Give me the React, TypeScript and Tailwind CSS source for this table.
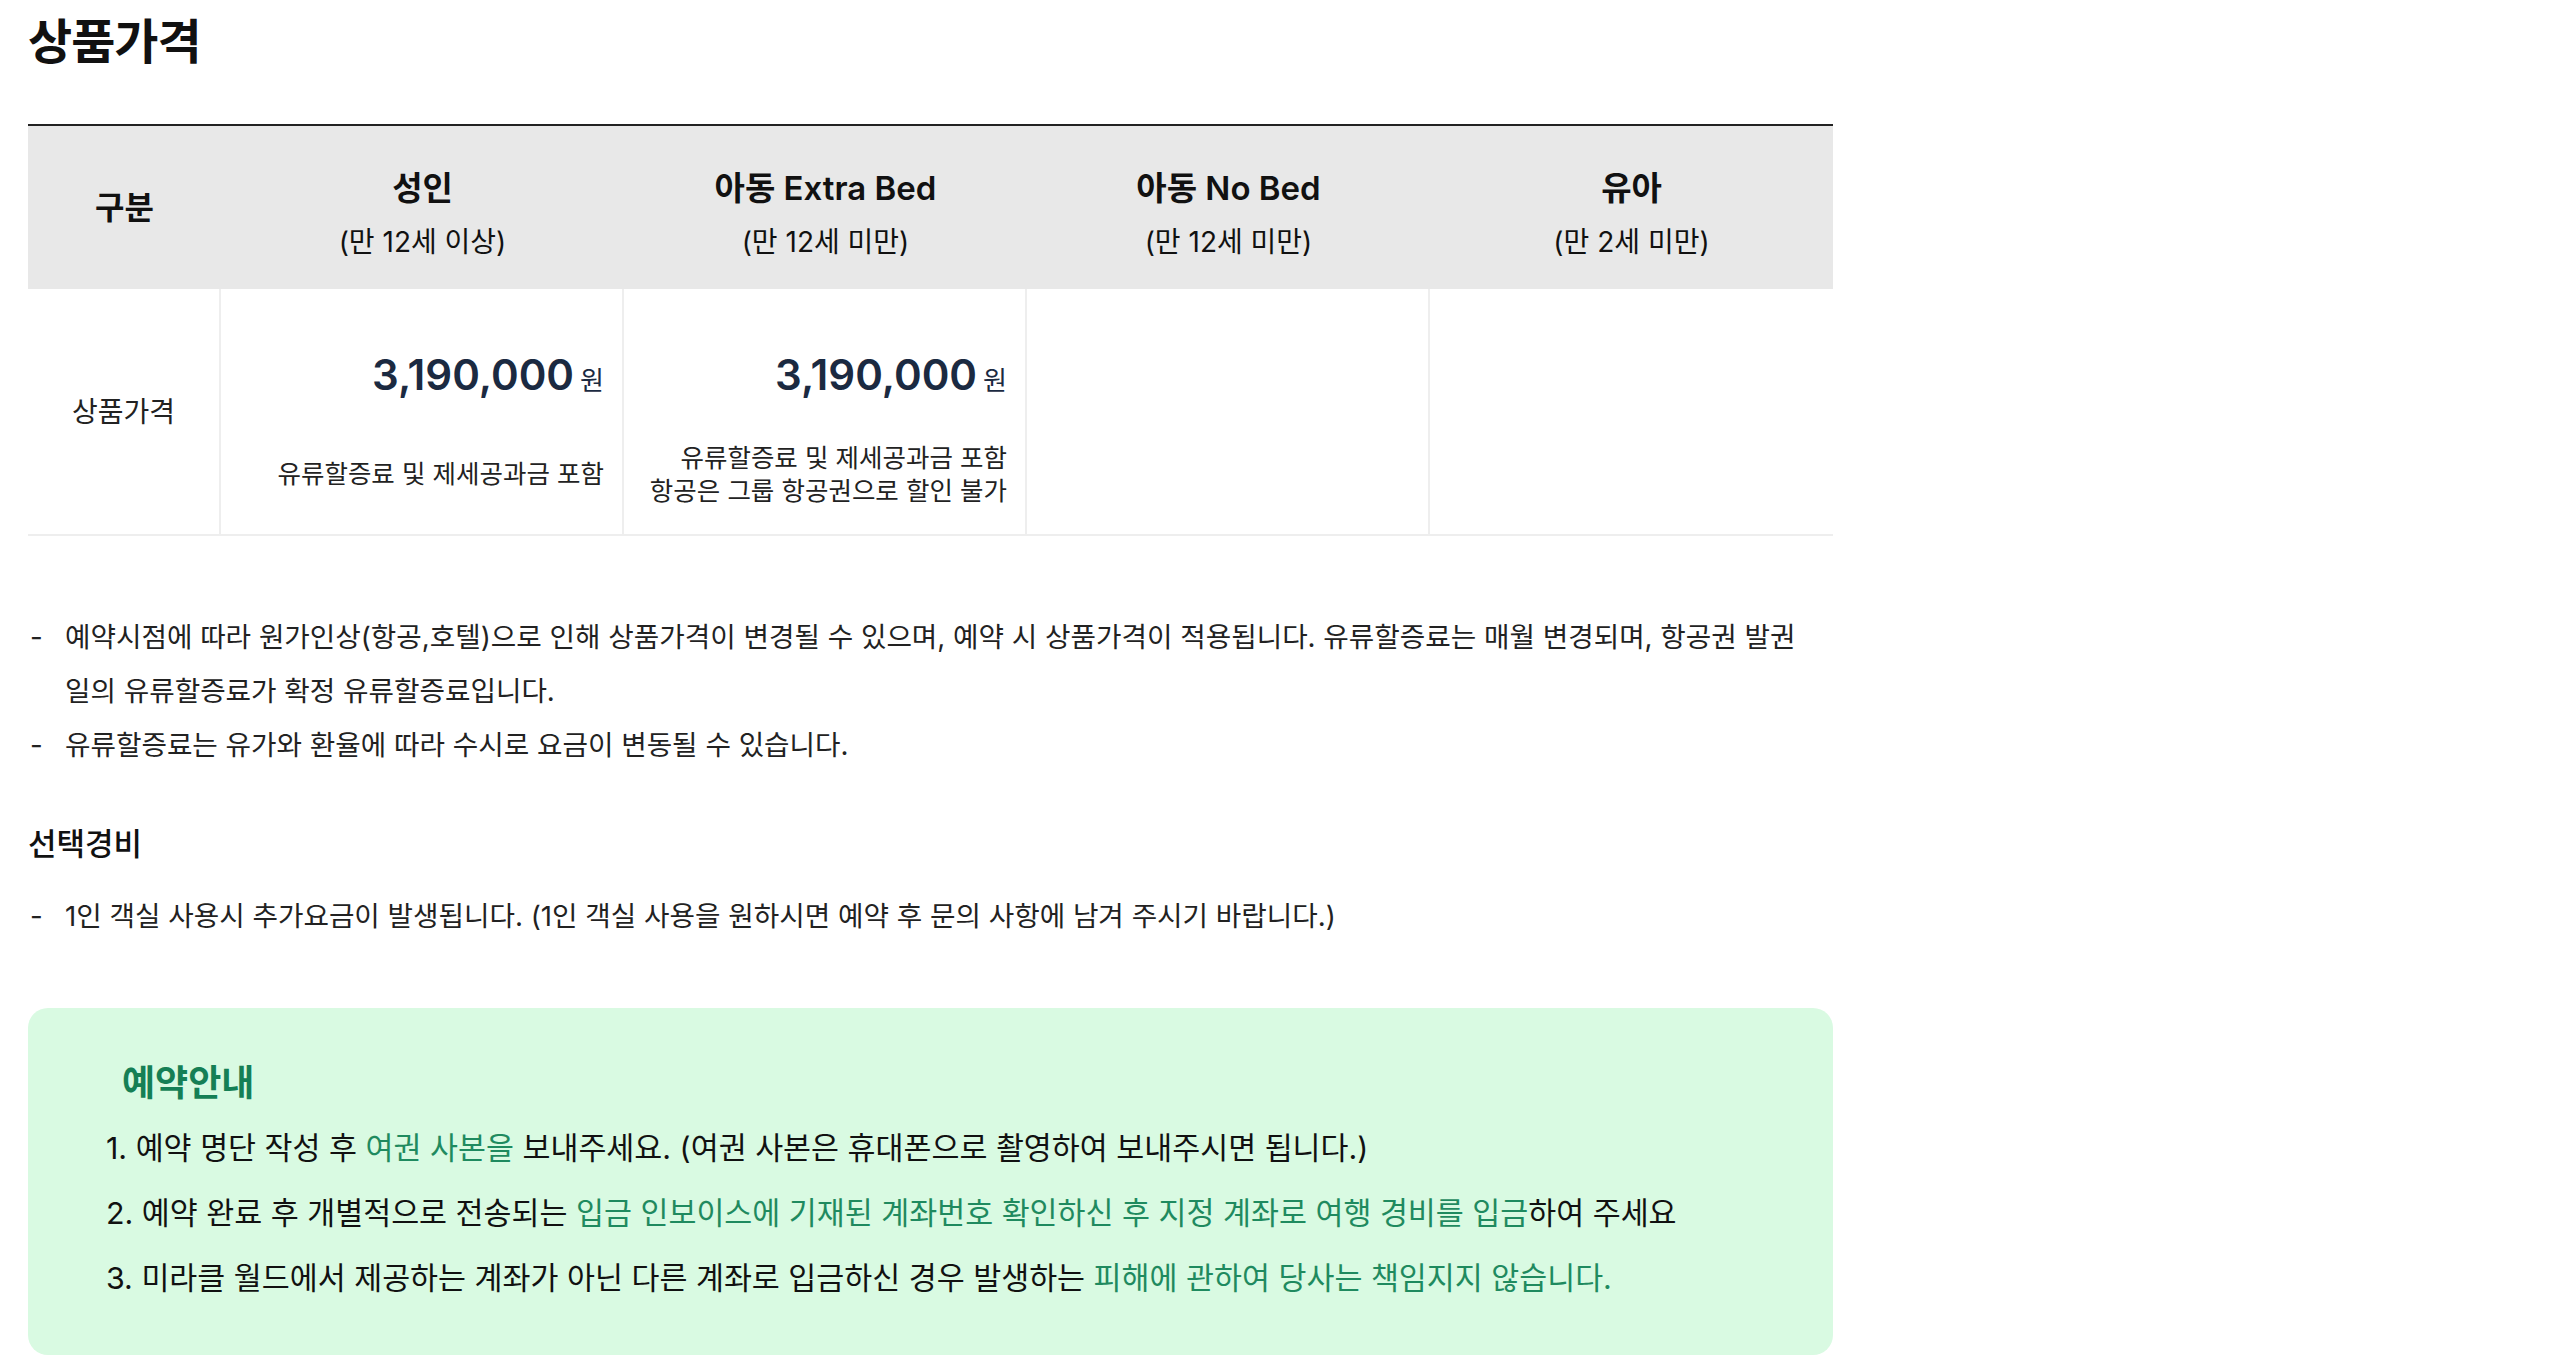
import React from 'react'

const font = { fontFamily: "Inter, 'Noto Sans CJK KR', sans-serif" }

const columns = [
  { title: '성인', sub: '(만 12세 이상)' },
  { title: '아동 Extra Bed', sub: '(만 12세 미만)' },
  { title: '아동 No Bed', sub: '(만 12세 미만)' },
  { title: '유아', sub: '(만 2세 미만)' },
]

const prices: { amount?: string; notes: string[] }[] = [
  { amount: '3,190,000', notes: ['유류할증료 및 제세공과금 포함'] },
  { amount: '3,190,000', notes: ['유류할증료 및 제세공과금 포함', '항공은 그룹 항공권으로 할인 불가'] },
  { notes: [] },
  { notes: [] },
]

function Dash({ children }: { children: React.ReactNode }) {
  return (
    <li className="flex text-[27.7px] leading-[54px] text-[#222]">
      <span className="w-[37px] shrink-0 pl-[2px]">-</span>
      <span>{children}</span>
    </li>
  )
}

function Hl({ children }: { children: React.ReactNode }) {
  return <span className="text-[#1f8a5f]">{children}</span>
}

export default function App() {
  return (
    <div className="min-h-screen w-full bg-white text-[#222]" style={font}>
      <div className="ml-[28px] w-[1805px] pt-[14px]">
        <h2 className="text-[48px] font-bold leading-[56px] tracking-[-1px] text-[#111]">상품가격</h2>

        {/* price table */}
        <div className="mt-[54px] border-t-2 border-[#222]">
          <div className="grid h-[163px] grid-cols-[193px_repeat(4,minmax(0,1fr))] bg-[#e8e8e8] text-[#111]">
            <div className="flex items-center justify-center text-[32px] font-bold">구분</div>
            {columns.map(c => (
              <div key={c.title + c.sub} className="flex flex-col items-center pt-[42px]">
                <div className="text-[33px] font-semibold leading-[40px]">{c.title}</div>
                <div className="mt-[16px] text-[28px] leading-[36px]">{c.sub}</div>
              </div>
            ))}
          </div>

          <div className="grid grid-cols-[193px_repeat(4,minmax(0,1fr))] grid-rows-[124px_121px] border-b-2 border-[#eeeeee]">
            <div className="row-span-2 flex items-center justify-center border-r-2 border-[#eeeeee] text-[28px]">
              상품가격
            </div>
            {prices.map((p, i) => (
              <div
                key={'p' + i}
                className={`flex items-end justify-end pb-[13px] pr-[18px] ${i < 3 ? 'border-r-2 border-[#eeeeee]' : ''}`}
              >
                {p.amount && (
                  <div className="flex items-baseline gap-[6px]">
                    <span className="text-[42px] font-semibold leading-[40px] text-[#1b2a41]">{p.amount}</span>
                    <span className="text-[26px] text-[#1b2a41]">원</span>
                  </div>
                )}
              </div>
            ))}
            {prices.map((p, i) => (
              <div
                key={'n' + i}
                className={`flex flex-col items-end justify-center pr-[18px] text-right text-[25.5px] leading-[33px] ${i < 3 ? 'border-r-2 border-[#eeeeee]' : ''}`}
              >
                {p.notes.map(n => (
                  <div key={n}>{n}</div>
                ))}
              </div>
            ))}
          </div>
        </div>

        <ul className="mt-[74px]">
          <Dash>
            예약시점에 따라 원가인상(항공,호텔)으로 인해 상품가격이 변경될 수 있으며, 예약 시 상품가격이 적용됩니다. 유류할증료는 매월 변경되며, 항공권 발권
            <br />
            일의 유류할증료가 확정 유류할증료입니다.
          </Dash>
          <Dash>유류할증료는 유가와 환율에 따라 수시로 요금이 변동될 수 있습니다.</Dash>
        </ul>

        <h3 className="mt-[52px] text-[31px] font-medium leading-[40px] text-[#111]">선택경비</h3>
        <ul className="mt-[25px]">
          <Dash>1인 객실 사용시 추가요금이 발생됩니다. (1인 객실 사용을 원하시면 예약 후 문의 사항에 남겨 주시기 바랍니다.)</Dash>
        </ul>

        {/* booking guide */}
        <div className="mt-[65px] h-[347px] rounded-[20px] bg-[#d9fae2] pl-[78px] pt-[52px]">
          <h4 className="ml-[16px] text-[36px] font-bold leading-[46px] text-[#157f55]">예약안내</h4>
          <ol className="mt-[10px] text-[30.4px] leading-[65px] text-[#111]">
            <li>
              1. 예약 명단 작성 후 <Hl>여권 사본을</Hl> 보내주세요. (여권 사본은 휴대폰으로 촬영하여 보내주시면 됩니다.)
            </li>
            <li>
              2. 예약 완료 후 개별적으로 전송되는 <Hl>입금 인보이스에 기재된 계좌번호 확인하신 후 지정 계좌로 여행 경비를 입금</Hl>하여 주세요
            </li>
            <li>
              3. 미라클 월드에서 제공하는 계좌가 아닌 다른 계좌로 입금하신 경우 발생하는 <Hl>피해에 관하여 당사는 책임지지 않습니다.</Hl>
            </li>
          </ol>
        </div>
      </div>
    </div>
  )
}
